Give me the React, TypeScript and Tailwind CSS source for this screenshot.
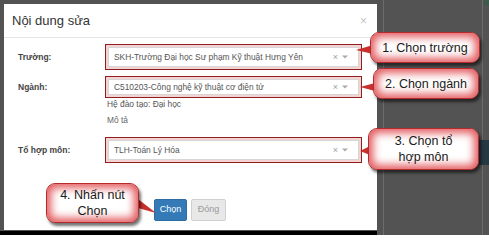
import React from "react";

const font = { fontFamily: '"Liberation Sans", Arial, sans-serif' };

function Select({ text, h }: { text: string; h: string }) {
  return (
    <div
      className={`w-[257px] ${h} border-[1.5px] border-[#8e1f1f] bg-[#f4d3d3] p-[2px] flex`}
    >
      <div className="flex-1 bg-white border border-[#d6d6d6] flex items-center pl-[5px] pr-[10px]">
        <span className="flex-1 text-[8.4px] text-[#555] whitespace-nowrap overflow-hidden">{text}</span>
        <span className="text-[9px] text-[#a0a0a0] leading-none">×</span>
        <svg width="6" height="4" viewBox="0 0 6 4" className="ml-[4px]">
          <path d="M0 0.5 L6 0.5 L3 3.5 Z" fill="#aaa" />
        </svg>
      </div>
    </div>
  );
}

function Callout({ cls, children }: { cls: string; children: React.ReactNode }) {
  return (
    <div
      className={`absolute ${cls} rounded-[9px] border border-[#b52a2a] bg-white flex items-center justify-center text-center text-[12.5px] leading-[16px] text-[#1a1a1a] shadow-[inset_0_0_8px_4px_#e2585c,2px_3px_3px_rgba(0,0,0,0.55)]`}
    >
      <div>{children}</div>
    </div>
  );
}

export default function App() {
  return (
    <div className="relative w-[489px] h-[235px] bg-[#535353] overflow-hidden" style={font}>
      {/* background details */}
      <div className="absolute left-[383px] top-0 w-px h-[235px] bg-[#6c6c6c]" />
      <div className="absolute left-[482px] top-0 w-px h-[235px] bg-[#6c6c6c]" />
      <div className="absolute left-[478px] top-[140px] w-[11px] h-[25px] bg-[#263842]" />
      <div className="absolute left-[484px] top-0 w-[5px] h-[6px] bg-[#3d5a4a]" />

      <div className="flex flex-col h-full">
        <div className="h-[231px] pl-[4px] pt-[4px]">
          <div className="w-[373px] h-[226px] bg-white flex flex-col">
            <div className="h-[34px] border-b border-[#e5e5e5] flex items-center justify-between pl-[8px] pr-[10px]">
              <span className="text-[13px] text-[#333]">Nội dung sửa</span>
              <span className="text-[12px] text-[#c4c4c4] leading-none">×</span>
            </div>
            <div className="flex flex-col pl-[14px]">
              <div className="mt-[6px] flex items-center">
                <div className="w-[87px] text-[8.5px] font-bold text-[#444]">Trường:</div>
                <Select text="SKH-Trường Đại học Sư phạm Kỹ thuật Hưng Yên" h="h-[26px]" />
              </div>
              <div className="mt-[6px] flex items-center">
                <div className="w-[87px] text-[8.5px] font-bold text-[#444]">Ngành:</div>
                <Select text="C510203-Công nghệ kỹ thuật cơ điện tử" h="h-[22px]" />
              </div>
              <div className="ml-[89px] text-[8.4px] leading-[12px] text-[#555]">Hệ đào tạo: Đại học</div>
              <div className="ml-[89px] mt-[4px] text-[8.4px] leading-[12px] text-[#666]">Mô tả</div>
              <div className="mt-[11px] flex items-center">
                <div className="w-[87px] text-[8.5px] font-bold text-[#444]">Tổ hợp môn:</div>
                <Select text="TLH-Toán Lý Hóa" h="h-[26px]" />
              </div>
              <div className="mt-[36px] ml-[136px] flex gap-[4px]">
                <div className="w-[33px] h-[22px] bg-[#337ab7] border border-[#2e6da4] rounded-[2px] flex items-center justify-center text-[9px] text-white">
                  Chọn
                </div>
                <div className="w-[35px] h-[22px] bg-[#e8e8e8] border border-[#d0d0d0] rounded-[2px] flex items-center justify-center text-[9px] text-[#9a9a9a]">
                  Đóng
                </div>
              </div>
            </div>
          </div>
        </div>
        <div className="w-[377px] h-[4px] bg-black" />
      </div>

      <svg className="absolute left-0 top-0 pointer-events-none" width="489" height="235">
        <polygon points="373,45 373,54 356,50" fill="#c9302c" />
        <polygon points="375,83 375,91 360,87" fill="#c9302c" />
        <polygon points="370,146 370,155 360,151" fill="#c9302c" />
        <polygon points="138,199 138,208 156,213" fill="#c9302c" />
      </svg>

      <Callout cls="left-[370px] top-[32px] w-[110px] h-[31px]">1. Chọn trường</Callout>
      <Callout cls="left-[373px] top-[68px] w-[106px] h-[31px]">2. Chọn ngành</Callout>
      <Callout cls="left-[368px] top-[128px] w-[111px] h-[42px]">
        3. Chọn tổ
        <br />
        hợp môn
      </Callout>
      <Callout cls="left-[46px] top-[183px] w-[93px] h-[40px]">
        4. Nhấn nút
        <br />
        Chọn
      </Callout>
    </div>
  );
}
